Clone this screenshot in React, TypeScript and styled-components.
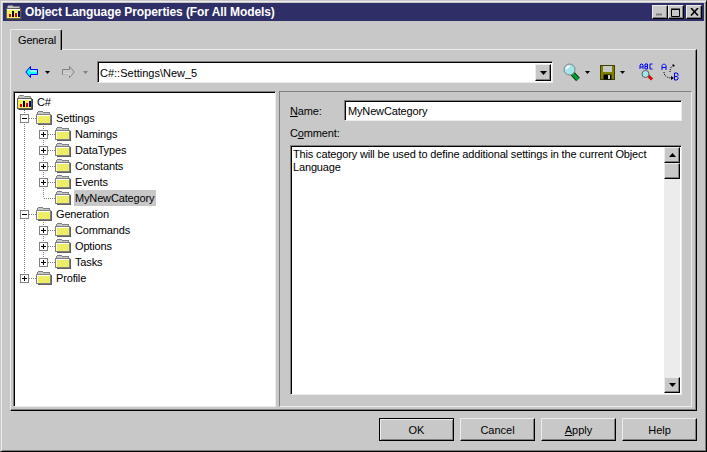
import React from 'react'
import styled, { createGlobalStyle } from 'styled-components'

const GlobalStyle = createGlobalStyle`
    html, body {
        margin: 0;
        padding: 0;
        background: #c8c8c8;
    }
    * {
        box-sizing: border-box;
    }
`

const Window = styled.div`
    width: 707px;
    height: 452px;
    display: flex;
    flex-direction: column;
    padding: 2px;
    background: #c8c8c8;
    border: 1px solid;
    border-color: #c8c8c8 #000 #000 #c8c8c8;
    box-shadow: inset 1px 1px 0 #ececec, inset -1px -1px 0 #808080;
    font-family: "Liberation Sans", Arial, sans-serif;
    font-size: 11px;
    letter-spacing: -0.15px;
    color: #000;
`

const TitleBar = styled.div`
    height: 18px;
    display: flex;
    align-items: center;
    padding: 0 2px 0 3px;
    background: #2f2f68;
    color: #fff;
    font-weight: bold;
    font-size: 12px;
    flex-shrink: 0;
`

const TitleText = styled.span`
    margin-left: 3px;
    flex: 1;
    letter-spacing: -0.09px;
`

const CaptionButton = styled.div<{ $gap?: number }>`
    width: 16px;
    height: 14px;
    margin-left: ${p => p.$gap || 0}px;
    display: flex;
    align-items: center;
    justify-content: center;
    background: #c8c8c8;
    border: 1px solid;
    border-color: #ececec #000 #000 #ececec;
    box-shadow: inset -1px -1px 0 #808080;
`

const Body = styled.div`
    flex: 1;
    display: flex;
    flex-direction: column;
    padding: 8px 7px 0 7px;
`

const TabStrip = styled.div`
    height: 20px;
    display: flex;
    flex-shrink: 0;
`

const Tab = styled.div`
    width: 52px;
    height: 21px;
    padding: 4px 0 0 7px;
    position: relative;
    z-index: 1;
    background: #c8c8c8;
    border-top: 1px solid #ececec;
    border-left: 1px solid #ececec;
    border-right: 1px solid #000;
    border-top-left-radius: 2px;
    border-top-right-radius: 2px;
    box-shadow: inset -1px 0 0 #808080;
    line-height: 13px;
`

const TabPanel = styled.div`
    height: 362px;
    display: flex;
    flex-direction: column;
    padding: 11px 3px 3px 2px;
    border: 1px solid;
    border-color: #ececec #000 #000 #ececec;
    box-shadow: inset -1px -1px 0 #808080;
`

const Toolbar = styled.div`
    height: 22px;
    display: flex;
    align-items: center;
    padding-left: 12px;
    margin-bottom: 8px;
    flex-shrink: 0;
`

const ToolIcon = styled.svg<{ $left?: number }>`
    display: block;
    flex-shrink: 0;
    margin-left: ${p => p.$left || 0}px;
`

const Combo = styled.div`
    width: 456px;
    height: 22px;
    margin-left: 9px;
    margin-right: 10px;
    display: flex;
    align-items: center;
    background: #fff;
    border: 1px solid;
    border-color: #808080 #ececec #ececec #808080;
    box-shadow: inset 1px 1px 0 #000;
    padding: 2px 1px 1px 2px;
    letter-spacing: 0;
    flex-shrink: 0;
`

const ComboText = styled.span`
    flex: 1;
`

const ComboArrow = styled.div`
    width: 16px;
    height: 17px;
    display: flex;
    align-items: center;
    justify-content: center;
    background: #c8c8c8;
    border: 1px solid;
    border-color: #ececec #000 #000 #ececec;
    box-shadow: inset -1px -1px 0 #808080;
`

const Split = styled.div`
    flex: 1;
    display: flex;
    gap: 3px;
    min-height: 0;
`

const TreeBox = styled.div`
    width: 263px;
    height: 316px;
    padding: 2px 0 0 3px;
    background: #fff;
    border: 1px solid;
    border-color: #808080 #ececec #ececec #808080;
    box-shadow: inset 1px 1px 0 #000;
    flex-shrink: 0;
`

const TreeRow = styled.div`
    height: 16px;
    display: flex;
    align-items: center;
`

const RowLabel = styled.span<{ $selected?: boolean }>`
    height: 16px;
    line-height: 16px;
    padding: 0 2px 0 1px;
    margin-left: 3px;
    background: ${p => (p.$selected ? '#c8c8c8' : 'transparent')};
`

const DetailPanel = styled.div`
    width: 413px;
    height: 316px;
    padding: 8px 9px 10px 10px;
    display: flex;
    flex-direction: column;
    border: 1px solid;
    border-color: #808080 #ececec #ececec #808080;
    flex-shrink: 0;
`

const NameRow = styled.div`
    display: flex;
    align-items: center;
    height: 21px;
`

const FieldLabel = styled.label`
    width: 54px;
    flex-shrink: 0;
`

const Key = styled.span`
    text-decoration: underline;
`

const NameInput = styled.div`
    flex: 1;
    height: 21px;
    display: flex;
    align-items: center;
    padding: 1px 0 0 3px;
    background: #fff;
    border: 1px solid;
    border-color: #808080 #ececec #ececec #808080;
    box-shadow: inset 1px 1px 0 #000;
`

const CommentLabel = styled.div`
    height: 14px;
    line-height: 14px;
    margin: 5px 0 5px 0;
`

const CommentBox = styled.div`
    height: 250px;
    display: flex;
    background: #fff;
    border: 1px solid;
    border-color: #808080 #ececec #ececec #808080;
    box-shadow: inset 1px 1px 0 #000;
    padding: 1px;
`

const CommentText = styled.div`
    flex: 1;
    padding: 1px 0 0 1px;
    line-height: 13px;
`

const ScrollBar = styled.div`
    width: 16px;
    display: flex;
    flex-direction: column;
    background: #ececec;
    flex-shrink: 0;
`

const ScrollButton = styled.div`
    width: 16px;
    height: 16px;
    display: flex;
    align-items: center;
    justify-content: center;
    background: #c8c8c8;
    border: 1px solid;
    border-color: #ececec #000 #000 #ececec;
    box-shadow: inset -1px -1px 0 #808080;
    flex-shrink: 0;
`

const ScrollTrack = styled.div`
    flex: 1;
`

const Footer = styled.div`
    display: flex;
    justify-content: flex-end;
    gap: 6px;
    margin-top: 7px;
`

const DialogButton = styled.div<{ $default?: boolean }>`
    width: 75px;
    height: 23px;
    display: flex;
    align-items: center;
    justify-content: center;
    background: #c8c8c8;
    border: 1px solid;
    border-color: ${p => (p.$default ? '#000' : '#ececec #000 #000 #ececec')};
    box-shadow: ${p =>
        p.$default
            ? 'inset 1px 1px 0 #ececec, inset -1px -1px 0 #808080'
            : 'inset -1px -1px 0 #808080'};
    letter-spacing: 0;
`

type TriangleProps = { up?: boolean; color?: string; left?: number; large?: boolean }

function Triangle({ up, color = '#000', left, large }: TriangleProps) {
    const w = large ? 7 : 5
    const h = large ? 4 : 3
    return (
        <ToolIcon $left={left} width={w} height={h} viewBox={`0 0 ${w} ${h}`}>
            <path d={up ? `M${w / 2} 0 ${w} ${h}H0Z` : `M0 0H${w}L${w / 2} ${h}Z`} fill={color} />
        </ToolIcon>
    )
}

function Folder() {
    return (
        <ToolIcon width="16" height="14" viewBox="0 0 16 14" shapeRendering="crispEdges">
            <path d="M1.5 3.5V1.5L2.5 .5H6.5L7.5 1.5H13.5V3.5" fill="#c8c8c8" stroke="#808080" />
            <rect x=".5" y="3.5" width="14" height="9" fill="#eeee66" stroke="#808080" />
            <path d="M15.5 4V13.5H1.5" fill="none" stroke="#606060" />
            <path d="M1 4.5H14M1.5 4.5V12" stroke="#fff" />
        </ToolIcon>
    )
}

function RootIcon() {
    return (
        <ToolIcon width="16" height="15" viewBox="0 0 16 15">
            <path d="M1.5 3.5V1.5L2.5 .5H6.5L7.5 1.5H13.5V3.5" fill="#c8c8c8" stroke="#808080" />
            <rect x=".5" y="3.5" width="14" height="10" fill="#f0f060" stroke="#606060" />
            <path d="M1 4.5H14" stroke="#fff" />
            <rect x="3" y="9" width="2" height="3" fill="#e00000" />
            <rect x="6" y="6" width="2" height="6" fill="#000" />
            <rect x="9" y="8" width="2" height="4" fill="#e00000" />
            <rect x="12" y="6" width="2" height="6" fill="#000080" />
            <path d="M15.5 4V14.5H1.5" fill="none" stroke="#404040" />
        </ToolIcon>
    )
}

type BranchProps = {
    through?: boolean
    last?: boolean
    expander?: '+' | '-'
}

// one 19px gutter cell of the tree: dotted guides and the optional +/- box
function Branch({ through, last, expander }: BranchProps) {
    const dots = { stroke: '#808080', strokeDasharray: '1 1', fill: 'none' }
    return (
        <ToolIcon width="19" height="16" viewBox="0 0 19 16">
            {through && <path d="M7.5 0V16" {...dots} />}
            {last && <path d="M7.5 0V8" {...dots} />}
            {(last || expander) && <path d="M8 8.5H19" {...dots} />}
            {expander && (
                <>
                    <rect x="3.5" y="4.5" width="8" height="8" fill="#fff" stroke="#808080" />
                    <path d="M5 8.5H10" stroke="#000" />
                    {expander === '+' && <path d="M7.5 6V11" stroke="#000" />}
                </>
            )}
        </ToolIcon>
    )
}

const BackArrow = () => (
    <ToolIcon width="13" height="12" viewBox="0 0 13 12">
        <path d="M5.5 .5 .8 6 5.5 11.5V8.5H12.5V3.5H5.5Z" fill="#00ffff" stroke="#0000ff" />
        <path d="M5 5H12" stroke="#fff" />
    </ToolIcon>
)

const ForwardArrow = () => (
    <ToolIcon $left={12} width="13" height="12" viewBox="0 0 13 12">
        <path d="M7.5 .5 12.2 6 7.5 11.5V8.5H.5V3.5H7.5Z" fill="#c8c8c8" stroke="#808080" />
        <path d="M1 8H8V10" fill="none" stroke="#ececec" />
    </ToolIcon>
)

const Magnifier = () => (
    <ToolIcon width="18" height="18" viewBox="0 0 18 18">
        <path d="M9.5 10.5 15 16.5" stroke="#004000" strokeWidth="5" />
        <path d="M9.5 10.5 15 16.5" stroke="#00a040" strokeWidth="3" />
        <circle cx="6.5" cy="6.5" r="5.5" fill="#a0e8e8" stroke="#808080" />
        <path d="M3.5 6.5A3 3 0 0 1 6.5 3.5" fill="none" stroke="#fff" strokeWidth="2" />
    </ToolIcon>
)

const Floppy = () => (
    <ToolIcon $left={10} width="15" height="15" viewBox="0 0 15 15">
        <rect x=".5" y=".5" width="14" height="14" fill="#808000" stroke="#404000" />
        <rect x="3" y="1" width="9" height="6" fill="#c8c8c8" />
        <rect x="3.5" y="9.5" width="8" height="5" fill="#000" />
        <rect x="8" y="10" width="2" height="4" fill="#c8c8c8" />
    </ToolIcon>
)

const SpellCheck = () => (
    <ToolIcon $left={14} width="16" height="18" viewBox="0 0 16 18">
        <path d="M1 6V2L2 1H3L4 2V6M1 4H4M6 6V1H8.5V3.5H6M8.5 3.5V6H6M13.5 1H11V6H13.5" fill="none" stroke="#0000ff" />
        <path d="M8.5 12 13 16.5" stroke="#e00000" strokeWidth="3" />
        <circle cx="6.5" cy="11" r="3.5" fill="#a0e8e8" stroke="#606060" />
    </ToolIcon>
)

const RouteAB = () => (
    <ToolIcon $left={6} width="18" height="18" viewBox="0 0 18 18">
        <path d="M1 7V2.5L2.5 1H3.5L5 2.5V7M1 4.5H5" fill="none" stroke="#0000ff" />
        <path d="M13.5 10V17M13.5 10H16L17 11V12.5L16 13.5H13.5M16 13.5L17 14.5V16L16 17H13.5" fill="none" stroke="#0000ff" />
        <path d="M3 9C3 13 6 15 11 15" fill="none" stroke="#000" strokeDasharray="1 1" />
        <path d="M9 9C9 6 10 3 13 2" fill="none" stroke="#000" strokeDasharray="1 1" />
        <path d="M10 13 13 15 10 17Z M11.5 1 14 2.5 12 4Z" fill="#000" />
    </ToolIcon>
)

type TreeItem = {
    label: string
    depth: 0 | 1
    expander?: '+' | '-'
    last?: boolean
    selected?: boolean
}

const treeItems: TreeItem[] = [
    { label: 'Settings', depth: 0, expander: '-' },
    { label: 'Namings', depth: 1, expander: '+' },
    { label: 'DataTypes', depth: 1, expander: '+' },
    { label: 'Constants', depth: 1, expander: '+' },
    { label: 'Events', depth: 1, expander: '+' },
    { label: 'MyNewCategory', depth: 1, last: true, selected: true },
    { label: 'Generation', depth: 0, expander: '-' },
    { label: 'Commands', depth: 1, expander: '+' },
    { label: 'Options', depth: 1, expander: '+' },
    { label: 'Tasks', depth: 1, expander: '+', last: true },
    { label: 'Profile', depth: 0, expander: '+', last: true },
]

function App() {
    return (
        <>
            <GlobalStyle />
            <Window>
                <TitleBar>
                    <RootIcon />
                    <TitleText>Object Language Properties (For All Models)</TitleText>
                    <CaptionButton>
                        <svg width="8" height="8" viewBox="0 0 8 8"><path d="M0 6.5H6" stroke="#808080" strokeWidth="2" /></svg>
                    </CaptionButton>
                    <CaptionButton>
                        <svg width="10" height="9" viewBox="0 0 10 9"><path d="M.5 1.5H8.5V8.5H.5Z" fill="none" stroke="#000" /><path d="M0 1H9" stroke="#000" /></svg>
                    </CaptionButton>
                    <CaptionButton $gap={2}>
                        <svg width="9" height="8" viewBox="0 0 9 8"><path d="M1 0 8 7.5M8 0 1 7.5" stroke="#000" strokeWidth="1.6" /></svg>
                    </CaptionButton>
                </TitleBar>
                <Body>
                    <TabStrip>
                        <Tab>General</Tab>
                    </TabStrip>
                    <TabPanel>
                        <Toolbar>
                            <BackArrow />
                            <Triangle left={7} />
                            <ForwardArrow />
                            <Triangle left={8} color="#808080" />
                            <Combo>
                                <ComboText>C#::Settings\New_5</ComboText>
                                <ComboArrow><Triangle large /></ComboArrow>
                            </Combo>
                            <Magnifier />
                            <Triangle left={4} />
                            <Floppy />
                            <Triangle left={5} />
                            <SpellCheck />
                            <RouteAB />
                        </Toolbar>
                        <Split>
                            <TreeBox>
                                <TreeRow>
                                    <RootIcon />
                                    <RowLabel>C#</RowLabel>
                                </TreeRow>
                                {treeItems.map(item => {
                                    const isLastRoot = item.depth === 0 && item.last
                                    return (
                                        <TreeRow key={item.label}>
                                            {item.depth === 1 && <Branch through />}
                                            <Branch
                                                through={!isLastRoot && !(item.depth === 1 && item.last)}
                                                last={item.last}
                                                expander={item.expander}
                                            />
                                            <Folder />
                                            <RowLabel $selected={item.selected}>{item.label}</RowLabel>
                                        </TreeRow>
                                    )
                                })}
                            </TreeBox>
                            <DetailPanel>
                                <NameRow>
                                    <FieldLabel><Key>N</Key>ame:</FieldLabel>
                                    <NameInput>MyNewCategory</NameInput>
                                </NameRow>
                                <CommentLabel>C<Key>o</Key>mment:</CommentLabel>
                                <CommentBox>
                                    <CommentText>
                                        This category will be used to define additional settings in the current Object Language
                                    </CommentText>
                                    <ScrollBar>
                                        <ScrollButton><Triangle up large /></ScrollButton>
                                        <ScrollButton />
                                        <ScrollTrack />
                                        <ScrollButton><Triangle large /></ScrollButton>
                                    </ScrollBar>
                                </CommentBox>
                            </DetailPanel>
                        </Split>
                    </TabPanel>
                    <Footer>
                        <DialogButton $default>OK</DialogButton>
                        <DialogButton>Cancel</DialogButton>
                        <DialogButton><span><Key>A</Key>pply</span></DialogButton>
                        <DialogButton>Help</DialogButton>
                    </Footer>
                </Body>
            </Window>
        </>
    )
}

export default App
